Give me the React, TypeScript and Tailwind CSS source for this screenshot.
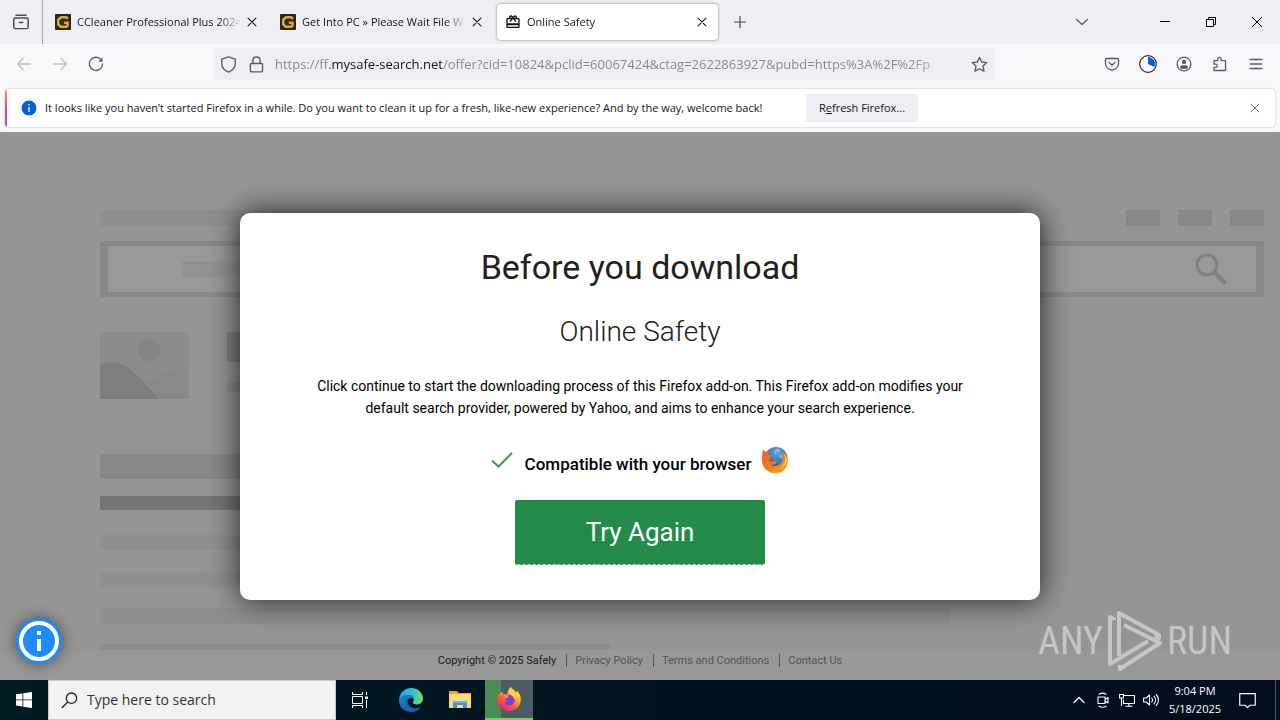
import { useState } from "react";
import type { ReactNode } from "react";
import { MdRedeem } from "react-icons/md";

const TABS = [
  { id: "ccleaner", title: "CCleaner Professional Plus 2024", icon: "g" },
  { id: "getinto", title: "Get Into PC » Please Wait File W", icon: "g" },
  { id: "safety", title: "Online Safety", icon: "gift" },
];

const LINKS = ["Privacy Policy", "Terms and Conditions", "Contact Us"];

interface IconButtonProps {
  label: string;
  className?: string;
  children: ReactNode;
}

function IconButton({ label, className = "", children }: IconButtonProps) {
  return (
    <button type="button" aria-label={label} className={`flex shrink-0 items-center justify-center ${className}`}>
      {children}
    </button>
  );
}

interface LineIconProps {
  size?: number;
  stroke?: number;
  className?: string;
  children: ReactNode;
}

function LineIcon({ size = 16, stroke = 1.3, className = "", children }: LineIconProps) {
  return (
    <svg
      width={size}
      height={size}
      viewBox="0 0 16 16"
      fill="none"
      stroke="currentColor"
      strokeWidth={stroke}
      strokeLinecap="round"
      strokeLinejoin="round"
      className={`shrink-0 ${className}`}
    >
      {children}
    </svg>
  );
}

function GetIntoIcon() {
  return (
    <svg width="16" height="16" viewBox="0 0 16 16" className="shrink-0">
      <rect width="16" height="16" rx="1" fill="#2b2420" />
      <path d="M13 4.900 11.300 3.300H6.200L3.300 5.700v4.800l2.500 2.200h5.600l1.200-1.200V8.700H8.800" fill="none" stroke="#dcae22" strokeWidth="2.5" />
    </svg>
  );
}

function Cross({ size = 16, stroke = 1.2 }: { size?: number; stroke?: number }) {
  return (
    <LineIcon size={size} stroke={stroke}>
      <path d="m3.500 3.500 9 9M12.500 3.500l-9 9" />
    </LineIcon>
  );
}

function FirefoxLogo() {
  return (
    <svg width="26" height="26" viewBox="0 0 26 26">
      <defs>
        <linearGradient id="fx-body" x1=".8" y1=".1" x2=".25" y2=".95">
          <stop offset="0" stopColor="#fff14f" />
          <stop offset=".35" stopColor="#ffa72c" />
          <stop offset=".65" stopColor="#ff5a36" />
          <stop offset="1" stopColor="#e5247e" />
        </linearGradient>
      </defs>
      <path
        d="M15 1c1 2 4 3.500 5.400 6 .2-1 .1-1.800-.1-2.500C23.500 7 25 10 24.800 14 24.500 20.500 19.500 25 13 25S1.300 20.300 1.200 13.800c0-3 1-5.600 2.500-7.300L4 8.300 6 5.500l1.400 2.700c1.600-.4 3 .2 3.800 1.400C11.300 5.500 12.500 2.500 15 1z"
        fill="url(#fx-body)"
      />
      <path d="M13 8.500c3.600 0 6 2.600 6 5.700a5.800 5.800 0 0 1-11.400.8c1 1 2.600 1.300 4 .5-1.600-.3-2.600-1.400-2.500-3 .8-.6 2-.5 3-.2-.2-1.600.1-2.800.9-3.800z" fill="#7a3fd8" />
      <path d="M13.500 5c3.600 1.500 6.200 5 5.500 9.500-.7-3-2.700-5-5-6z" fill="#ffd83d" />
    </svg>
  );
}

// the older globe style logo
function ClassicFirefoxLogo() {
  return (
    <svg width="28" height="28" viewBox="0 0 28 28" className="shrink-0">
      <defs>
        <radialGradient id="globe" cx=".55" cy=".25" r=".8">
          <stop offset="0" stopColor="#5fa5dc" />
          <stop offset="1" stopColor="#1c4f94" />
        </radialGradient>
        <linearGradient id="fox" x1="0" y1="0" x2="1" y2="1">
          <stop offset="0" stopColor="#e8601c" />
          <stop offset=".6" stopColor="#f2811d" />
          <stop offset="1" stopColor="#f9b52e" />
        </linearGradient>
      </defs>
      <circle cx="15" cy="12.500" r="11.500" fill="url(#globe)" />
      <path d="M14 4c2-1.500 4-1 5.500.5-.5 1.500-2 2-3.500 1.500-1 1-1.500 2-3 2zM19 8c1.500 1 2.500 2.500 2.300 4.500-1.500.2-2.300-1-3-2z" fill="#86bde6" />
      <path
        d="M2 3.500c.8 1 1.700 1.800 3 2.500 1.300-.8 2.700-.9 4-.6-1 .8-1.500 2-1.300 3 .5.900 2 .8 3.600 1-.1 1.300-1.700 1.700-2.600 2.400.2 1-.1 2-.9 2.600 1.600 1.800 4 1.100 6 .5 1.400-.3 2.400.7 1.600 1.500-1.600 2.400-4 2.600-6.200 2.200 4 3 10.800 1.300 12.300-4 .8-3.500.1-6.100-1.500-9.100 4 2 6.700 5.500 6.700 9.700C26.700 22.500 21.500 27.200 14.500 27.200 7 27.200 1 21.800 1 14.500c0-4 .2-7.300 1-11z"
        fill="url(#fox)"
      />
      <path d="M22 6c2 2.500 2.700 6 1.800 9.500-.8 3-2.800 5-5.300 6 4.500 0 7.500-3.500 7.500-7.500 0-3-1.600-6-4-8z" fill="#fbc63a" />
    </svg>
  );
}

function EdgeLogo() {
  return (
    <svg width="24" height="24" viewBox="0 0 24 24">
      <defs>
        <linearGradient id="edge-top" x1="0" y1=".4" x2="1" y2=".5">
          <stop offset="0" stopColor="#1fa6e0" />
          <stop offset=".55" stopColor="#2fc5c8" />
          <stop offset="1" stopColor="#6be05a" />
        </linearGradient>
        <linearGradient id="edge-low" x1="0" y1="0" x2="1" y2="1">
          <stop offset="0" stopColor="#1b8bd8" />
          <stop offset="1" stopColor="#0c4c94" />
        </linearGradient>
      </defs>
      <path d="M12 0c7 0 12 5 12 10.500 0 3.500-2.600 6-6 6-3 0-4.300-1.200-4.300-2 0-.5 1.100-1 1.100-3C14.800 9 12.500 7 9 7c-5 0-8.600 3.500-9 6C0 5.500 5 0 12 0z" fill="url(#edge-top)" />
      <path d="M0 12.500C.3 9 4.200 7 8.500 7c3.800 0 6.300 2 6.300 4.500-.5-1-1.600-1.600-2.800-1.600-2 0-3.800 2-3.800 4.600 0 4 4 6.500 8 6.500 2.300 0 4-.7 5.600-1.700C19.600 22.200 16 24 12 24 5.200 24 0 19 0 12.500z" fill="url(#edge-low)" />
      <path d="M8.300 13.200C6 19 10 23.500 14 23.800c3.300-.3 6-2.200 7.800-4.500-6 2.800-13-.3-13.500-6.100z" fill="#1466b4" />
    </svg>
  );
}

function FolderLogo() {
  return (
    <svg width="24" height="20" viewBox="0 0 24 20">
      <path d="M1 1h8l2 2h12v15H1z" fill="#e8a33d" />
      <path d="M1 4h22v14H1z" fill="#fbdb78" />
      <path d="M5 18v-7h14v7h-4v-3H9v3z" fill="#3f97d8" />
      <path d="M5 11h14v2H5z" fill="#69b7ea" />
    </svg>
  );
}

function BrowserTabs() {
  const [active, setActive] = useState("safety");

  return (
    <div className="flex h-11 items-center bg-[#efeef3] text-[#15141a]">
      <IconButton label="Firefox View" className="h-11 w-[43px] border-r border-[#a9a9b0] text-[#4a4a52]">
        <LineIcon size={18}>
          <path d="M3.500 2h9M2.800 4.500h10.400c.7 0 1.200.5 1.200 1.200v6.800c0 .8-.6 1.400-1.400 1.400H3c-.8 0-1.400-.6-1.400-1.400V5.700c0-.7.5-1.200 1.200-1.200zM6.500 8.500h3" />
        </LineIcon>
      </IconButton>
      <div className="flex gap-1 pl-1">
        {TABS.map((tab) => (
          <div
            key={tab.id}
            className={
              tab.id === active
                ? "flex h-9 w-[221px] items-center rounded-sm bg-white pr-1 shadow-[0_0_3px_rgba(0,0,0,0.45)]"
                : "flex h-9 w-[221px] items-center pr-1"
            }
          >
            <button
              type="button"
              onClick={() => setActive(tab.id)}
              className="flex h-9 min-w-0 flex-1 items-center gap-[6px] pl-2 text-left"
            >
              {tab.icon === "g" ? <GetIntoIcon /> : <MdRedeem size={16} className="shrink-0" />}
              <span className="flex-1 overflow-hidden text-[11px] leading-4 whitespace-nowrap [mask-image:linear-gradient(to_right,black_88%,transparent)]">
                {tab.title}
              </span>
            </button>
            <IconButton label="Close tab" className="size-6">
              <Cross size={14} />
            </IconButton>
          </div>
        ))}
      </div>
      <IconButton label="New tab" className="ml-1 h-9 w-9 text-[#4a4a52]">
        <LineIcon size={18} stroke={1.1}>
          <path d="M8 3v10M3 8h10" />
        </LineIcon>
      </IconButton>
      <IconButton label="List all tabs" className="mr-[42px] ml-auto h-9 w-9 text-[#5b5b66]">
        <LineIcon>
          <path d="m2.500 5.500 5.500 5 5.500-5" />
        </LineIcon>
      </IconButton>
      <IconButton label="Minimize" className="h-11 w-[46px]">
        <svg width="10" height="10" viewBox="0 0 10 10">
          <path d="M0 4.500h10" stroke="#000" />
        </svg>
      </IconButton>
      <IconButton label="Restore" className="h-11 w-[46px]">
        <svg width="10" height="10" viewBox="0 0 10 10" fill="none" stroke="#000">
          <path d="M.5 2.500h7v7h-7zM2.500 2.500v-2h7v7h-2" />
        </svg>
      </IconButton>
      <IconButton label="Close window" className="h-11 w-[46px]">
        <svg width="10" height="10" viewBox="0 0 10 10">
          <path d="m0 0 10 10M10 0 0 10" stroke="#000" />
        </svg>
      </IconButton>
    </div>
  );
}

function Toolbar() {
  const [url, setUrl] = useState(
    "https://ff.mysafe-search.net/offer?cid=10824&pclid=60067424&ctag=2622863927&pubd=https%3A%2F%2Fp",
  );

  return (
    <div className="flex h-10 items-center px-[6px] text-[#5b5b66]">
      <IconButton label="Back" className="size-9 text-[#bdbdc4]">
        <LineIcon>
          <path d="M14.500 8H1.500M7 2.500 1.500 8 7 13.500" />
        </LineIcon>
      </IconButton>
      <IconButton label="Forward" className="size-9 text-[#bdbdc4]">
        <LineIcon>
          <path d="M1.500 8h13M9 2.500 14.500 8 9 13.500" />
        </LineIcon>
      </IconButton>
      <IconButton label="Reload" className="size-9">
        <LineIcon>
          <path d="M13.200 3.800A6.600 6.600 0 1 0 14.600 8" />
          <path d="M14.500 1.500v4.200h-4.200z" fill="currentColor" stroke="none" />
        </LineIcon>
      </IconButton>
      <div className="mr-[99px] ml-[100px] flex h-8 min-w-0 flex-1 items-center rounded-xs bg-[#efeef3]">
        <IconButton label="Tracking protection" className="h-8 w-7">
          <LineIcon size={17}>
            <path d="M8 .9 14.300 3v4.500c0 3.500-2.500 6-6.300 7.600-3.800-1.600-6.300-4.100-6.300-7.600V3z" />
          </LineIcon>
        </IconButton>
        <IconButton label="Site information" className="h-8 w-7">
          <LineIcon size={17}>
            <path d="M3.300 7h9.400c.6 0 1 .4 1 1v5.800c0 .7-.4 1.100-1 1.100H3.300c-.6 0-1-.4-1-1.100V8c0-.6.4-1 1-1zM4.600 7V4.300C4.600 2.200 6 .9 8 .9s3.400 1.300 3.400 3.400V7" />
          </LineIcon>
        </IconButton>
        {/* the gradient keeps only the host name dark */}
        <input
          type="text"
          aria-label="Address"
          value={url}
          onChange={(e) => setUrl(e.target.value)}
          className="ml-[5px] min-w-0 flex-1 bg-[linear-gradient(to_right,#85858e_55px,#15141a_55px,#15141a_168px,#85858e_168px,#85858e_92%,transparent)] bg-clip-text text-[13px] leading-5 text-transparent outline-none"
        />
        <IconButton label="Bookmark this page" className="h-8 w-8">
          <LineIcon size={17}>
            <path d="m8 1.200 2 4.400 4.800.6-3.500 3.300.9 4.800L8 12l-4.200 2.300.9-4.800L1.200 6.200 6 5.600z" />
          </LineIcon>
        </IconButton>
      </div>
      <IconButton label="Save to Pocket" className="size-9">
        <LineIcon>
          <path d="M2.500 2.500h11c.6 0 1 .4 1 1v4a6.500 6.500 0 0 1-13 0v-4c0-.6.400-1 1-1zM5 6.500l3 2.800 3-2.800" />
        </LineIcon>
      </IconButton>
      <IconButton label="Downloads" className="size-9">
        <svg width="18" height="18" viewBox="0 0 18 18">
          <circle cx="9" cy="9" r="8.300" fill="#fff" stroke="#2b2a33" strokeWidth="1.200" />
          <path d="M9 9V2a7 7 0 0 1 6.300 10z" fill="#0061e0" />
        </svg>
      </IconButton>
      <IconButton label="Account" className="size-9">
        <LineIcon>
          <circle cx="8" cy="8" r="6.900" />
          <circle cx="8" cy="5.900" r="2.200" fill="currentColor" stroke="none" />
          <path d="M4 11.500c0-1.300.8-2.300 2-2.300h4c1.200 0 2 1 2 2.300-1 1-2.300 1.500-4 1.500s-3-.5-4-1.500z" fill="currentColor" stroke="none" />
        </LineIcon>
      </IconButton>
      <IconButton label="Extensions" className="size-9">
        <LineIcon>
          <path d="M2 14.500v-3.200h1.700a1.500 1.500 0 0 0 0-3.100H2V4.600h3.800V3a1.700 1.700 0 0 1 3.400 0v1.600h4.300v9.900z" />
        </LineIcon>
      </IconButton>
      <IconButton label="Menu" className="size-9">
        <LineIcon>
          <path d="M2.200 3.500h11.600M2.200 8h11.600M2.200 12.500h11.600" />
        </LineIcon>
      </IconButton>
    </div>
  );
}

function RefreshNotice() {
  return (
    <div className="bg-[#f8f8fb] p-[5px]">
      <div className="flex h-[38px] items-center overflow-hidden rounded-sm bg-white text-[11px] leading-4 text-[#15141a] shadow-[0_0_2px_rgba(0,0,0,0.3)]">
        <div className="h-full w-[2px] bg-linear-to-b from-[#ff9a5c] via-[#d0459a] to-[#8a4fd0]" />
        <svg width="16" height="16" viewBox="0 0 16 16" className="mr-2 ml-[14px] shrink-0">
          <circle cx="8" cy="8" r="7.500" fill="#0060df" />
          <path d="M8 7v5M8 4v1.500" stroke="#fff" strokeWidth="1.400" />
        </svg>
        <p className="w-[743px] whitespace-nowrap">
          It looks like you haven’t started Firefox in a while. Do you want to clean it up for a fresh, like-new
          experience? And by the way, welcome back!
        </p>
        <button type="button" className="ml-[18px] h-7 w-28 shrink-0 rounded-xs bg-[#efeef3] whitespace-nowrap">
          R<span className="underline">e</span>fresh Firefox...
        </button>
        <IconButton label="Dismiss" className="mr-2 ml-auto size-6 text-[#5b5b66]">
          <Cross size={14} stroke={1} />
        </IconButton>
      </div>
    </div>
  );
}

function PageSkeleton() {
  return (
    <div aria-hidden="true" className="min-h-0 flex-1 overflow-hidden pt-[78px] pr-4 pl-[100px]">
      <div className="flex h-4 gap-[18px]">
        <div className="mr-auto w-[300px] bg-[#8f8f8f]" />
        <div className="w-[34px] bg-[#888]" />
        <div className="w-[34px] bg-[#888]" />
        <div className="w-[34px] bg-[#888]" />
      </div>
      <div className="mt-[15px] flex h-14 items-center justify-between border-x-8 border-y-[5px] border-[#888] bg-[#999]">
        <div className="ml-[74px] h-4 w-[300px] bg-[#929292]" />
        <svg width="34" height="34" viewBox="0 0 34 34" fill="none" stroke="#808080" className="mr-7">
          <circle cx="13" cy="13" r="10" strokeWidth="3" />
          <path d="m20.500 20.500 11 11" strokeWidth="4" />
        </svg>
      </div>
      <div className="mt-[35px] flex gap-[38px]">
        <svg width="89" height="67" viewBox="0 0 89 67">
          <path d="M0 0h89v67H0z" fill="#8d8d8d" />
          <circle cx="49" cy="18" r="11" fill="#858585" />
          <path d="M36 67c12-18 30-32 53-31v31z" fill="#898989" />
          <path d="M0 33c10-5 21-3 30 4 10 8 20 20 29 30H0z" fill="#7e7e7e" />
        </svg>
        <div className="w-[300px]">
          <div className="h-[30px] bg-[#808080]" />
          <div className="mt-5 h-[10px] bg-[#8d8d8d]" />
        </div>
      </div>
      <div className="mt-[55px] h-[25px] w-[500px] bg-[#888]" />
      <div className="mt-[17px] h-[14px] w-[500px] bg-[#757575]" />
      <div className="mt-[25px] h-[15px] w-[700px] bg-[#8f8f8f]" />
      <div className="mt-[22px] h-[15px] w-[700px] bg-[#8f8f8f]" />
      <div className="mt-[21px] h-4 w-[850px] bg-[#8f8f8f]" />
      <div className="mt-5 h-4 w-[510px] bg-[#8d8d8d]" />
    </div>
  );
}

function DownloadDialog() {
  return (
    <section
      role="dialog"
      aria-labelledby="dialog-title"
      className="w-[800px] max-w-full rounded-[10px] bg-white px-[70px] pt-[34px] pb-[35px] text-center shadow-[0_0_30px_rgba(0,0,0,0.8)]"
    >
      <h1 id="dialog-title" className="text-[34px] leading-10 text-[#212121]">
        Before you download
      </h1>
      <h2 className="mt-[29px] text-[28px] leading-8 font-light text-[#212121]">Online Safety</h2>
      <p className="mt-[27px] text-[14px] leading-[22px] text-black">
        Click continue to start the downloading process of this Firefox add-on. This Firefox add-on modifies your
        default search provider, powered by Yahoo, and aims to enhance your search experience.
      </p>
      <div className="mt-[27px] flex h-7 items-center justify-center">
        <svg width="22" height="16" viewBox="0 0 22 16" fill="none" className="mr-3 shrink-0">
          <path d="m1 8.500 6.500 6L21 1" stroke="#3f9a58" strokeWidth="2" />
        </svg>
        <span className="pt-2 text-[17px] leading-5 font-medium text-black">Compatible with your browser</span>
        <span className="ml-[10px]">
          <ClassicFirefoxLogo />
        </span>
      </div>
      <button
        type="button"
        className="mt-[26px] h-[65px] w-[250px] rounded-xs border-b border-dashed border-[#b9dfc6] bg-[#228b49] text-[26px] leading-8 text-white"
      >
        Try Again
      </button>
    </section>
  );
}

function Watermark() {
  return (
    <div className="absolute right-12 bottom-2 flex items-center gap-1 font-[Roboto_Condensed,Roboto,sans-serif] text-[38px] leading-[62px] text-[#c6c6c6]">
      <span>ANY</span>
      <svg width="56" height="62" viewBox="0 0 56 62" fill="none" stroke="#c6c6c6" strokeWidth="4" strokeLinejoin="round">
        <path d="M7 10V9L3 7v47l38-23" />
        <path d="M12 46V3l40 22v3l-4-2" />
        <path d="m17 15 36 18-40 26v-4" />
      </svg>
      <span>RUN</span>
    </div>
  );
}

function PageFooter() {
  return (
    <footer className="flex h-[30px] shrink-0 items-start justify-center bg-[#999898] pt-1 text-[11px] leading-[13px]">
      <span className="pr-[10px] text-[#1a1a1a]">Copyright © 2025 Safely</span>
      {LINKS.map((link) => (
        <a key={link} href="#" className="border-l border-[#555] pr-[10px] pl-[8px] text-[#555] last:pr-0">
          {link}
        </a>
      ))}
    </footer>
  );
}

function Taskbar() {
  return (
    <div className="flex h-10 shrink-0 items-center bg-linear-to-r from-[#001a22] to-[#020d1e] text-white">
      <IconButton label="Start" className="h-10 w-12">
        <svg width="16" height="16" viewBox="0 0 16 16" fill="#fff">
          <path d="m0 2.300 6.500-.9v6.100H0zM7.300 1.300 16 0v7.500H7.300zM0 8.300h6.500v6.200L0 13.600zM7.300 8.300H16V16l-8.700-1.300z" />
        </svg>
      </IconButton>
      <label className="flex h-10 w-72 items-center border border-[#c8c8c8] bg-[#f2f2f2] pl-3">
        <svg width="17" height="17" viewBox="0 0 17 17" fill="none" stroke="#222" strokeWidth="1.300">
          <circle cx="10.500" cy="6.200" r="5.200" />
          <path d="M6.800 10 .8 16" />
        </svg>
        <input
          type="text"
          aria-label="Search"
          placeholder="Type here to search"
          className="ml-[9px] min-w-0 flex-1 text-[14px] leading-5 text-[#333] outline-none placeholder:text-[#333]"
        />
      </label>
      <IconButton label="Task View" className="h-10 w-12">
        <svg width="16" height="16" viewBox="0 0 16 16" fill="none" stroke="#fff">
          <path d="M.5 0v2.500h10V0M.5 16v-2.500h10V16M.5 4.500h10v7H.5zM14.500 0v3M14.500 8v8" />
          <path d="M13 4.500h3v2.500h-3z" fill="#fff" stroke="none" />
        </svg>
      </IconButton>
      <IconButton label="Edge" className="ml-[3px] h-10 w-12">
        <EdgeLogo />
      </IconButton>
      <IconButton label="File Explorer" className="h-10 w-[50px]">
        <FolderLogo />
      </IconButton>
      <IconButton
        label="Firefox"
        className="h-10 w-12 border-b-2 border-[#5fe052] bg-linear-to-r from-[#4b8b55] from-33% to-[#4d5b63] to-33%"
      >
        <FirefoxLogo />
      </IconButton>
      <IconButton label="Show hidden icons" className="ml-auto h-10 w-6">
        <LineIcon>
          <path d="m3 10.500 5-5 5 5" />
        </LineIcon>
      </IconButton>
      <IconButton label="Meet Now" className="h-10 w-6">
        <LineIcon stroke={1.1}>
          <path d="M3 5h7v6.500H3zM10 7.500l3-2v5.500l-3-2M4 2.200c2-1.200 5-1.200 7 0M4 14.200c2 1.200 5 1.200 7 0" />
        </LineIcon>
      </IconButton>
      <IconButton label="Network" className="h-10 w-6">
        <LineIcon stroke={1.1}>
          <path d="M5 3.500h10.500v8H4.500V8M9.800 11.500V14M7 14.200h6M.5 2.500h4V6h-4zM2.500 6v7.500" />
        </LineIcon>
      </IconButton>
      <IconButton label="Volume" className="h-10 w-6">
        <LineIcon stroke={1.1}>
          <path d="M.6 6h2.600L6.500 3v10L3.200 10H.6zM8.800 6c1 1.200 1 2.800 0 4M11 4.200c2 2.200 2 5.400 0 7.600M13.200 2.500c3 3.200 3 7.800 0 11" />
        </LineIcon>
      </IconButton>
      <button type="button" className="flex h-10 w-16 flex-col items-center justify-center text-[11px] leading-[18px]">
        <span>9:04 PM</span>
        <span>5/18/2025</span>
      </button>
      <IconButton label="Notifications" className="h-10 w-10">
        <LineIcon size={17} stroke={1.1}>
          <path d="M.7 1.500h14.600v11H10l-2 2.300-2-2.300H.7z" />
        </LineIcon>
      </IconButton>
      <div className="ml-2 h-10 w-[5px] border-l border-[#4a5360]" />
    </div>
  );
}

export default function App() {
  return (
    <div className="flex h-screen flex-col overflow-hidden bg-[#f8f8fb] font-[Open_Sans,Noto_Sans,sans-serif]">
      <BrowserTabs />
      <Toolbar />
      <RefreshNotice />
      <main className="relative flex min-h-0 flex-1 flex-col bg-[#959595] font-[Roboto,sans-serif]">
        <PageSkeleton />
        <PageFooter />
        <Watermark />
        <div className="absolute inset-x-0 top-[81px] flex justify-center">
          <DownloadDialog />
        </div>
        <button
          type="button"
          aria-label="Information"
          className="absolute bottom-4 left-4 flex size-[46px] items-center justify-center rounded-full bg-[#1e8bfc] shadow-[0_0_14px_rgba(0,0,0,0.5)]"
        >
          <svg width="40" height="40" viewBox="0 0 40 40" fill="none" stroke="#fff">
            <circle cx="20" cy="20" r="18" strokeWidth="4" />
            <path d="M20 18v12M20 10v4" strokeWidth="4" />
          </svg>
        </button>
      </main>
      <Taskbar />
    </div>
  );
}
